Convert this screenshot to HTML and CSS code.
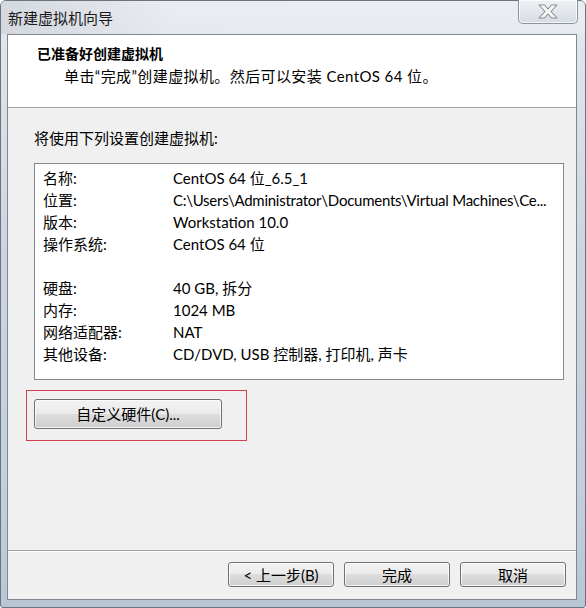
FILE: index.html
```html
<!DOCTYPE html>
<html lang="zh-CN">
<head>
<meta charset="utf-8">
<title>新建虚拟机向导</title>
<link rel="stylesheet" href="styles.css">
</head>
<body>
<div class="window">
  <div class="titlebar">
    <span class="title">新建虚拟机向导</span>
    <button class="close" aria-label="关闭">
      <svg width="24" height="17" viewBox="0 0 24 17">
        <path d="M3 2 H8.5 L12 6 L15.5 2 H21 L15 8.5 L21 15 H15.5 L12 11 L8.5 15 H3 L9 8.5 Z" fill="#f6f6f6" stroke="#8a8e94" stroke-width="1.1" stroke-linejoin="round"/>
      </svg>
    </button>
  </div>
  <div class="client">
    <div class="header">
      <div class="h-title">已准备好创建虚拟机</div>
      <div class="h-sub">单击“完成”创建虚拟机。然后可以安装 CentOS 64 位。</div>
    </div>
    <div class="content">
      <div class="intro">将使用下列设置创建虚拟机:</div>
      <div class="listbox">
        <div class="row"><span class="k">名称:</span><span class="v">CentOS 64 位_6.5_1</span></div>
        <div class="row"><span class="k">位置:</span><span class="v path">C:\Users\Administrator\Documents\Virtual Machines\Ce...</span></div>
        <div class="row"><span class="k">版本:</span><span class="v">Workstation 10.0</span></div>
        <div class="row"><span class="k">操作系统:</span><span class="v">CentOS 64 位</span></div>
        <div class="row"><span class="k"></span><span class="v"></span></div>
        <div class="row"><span class="k">硬盘:</span><span class="v">40 GB, 拆分</span></div>
        <div class="row"><span class="k">内存:</span><span class="v">1024 MB</span></div>
        <div class="row"><span class="k">网络适配器:</span><span class="v">NAT</span></div>
        <div class="row"><span class="k">其他设备:</span><span class="v">CD/DVD, USB 控制器, 打印机, 声卡</span></div>
      </div>
      <div class="highlight">
        <button class="btn btn-custom">自定义硬件(C)...</button>
      </div>
    </div>
    <div class="footer">
      <button class="btn">&lt;&nbsp;上一步(B)</button>
      <button class="btn">完成</button>
      <button class="btn">取消</button>
    </div>
  </div>
</div>
</body>
</html>
```

FILE: styles.css
```css
* { box-sizing: border-box; }
html, body {
  margin: 0;
  padding: 0;
  width: 586px;
  height: 608px;
  overflow: hidden;
  background: #ffffff;
}
body {
  font-family: "Lato", "Noto Sans CJK SC", sans-serif;
  font-size: 15px;
  color: #000;
}
.window {
  width: 586px;
  height: 608px;
  display: flex;
  flex-direction: column;
  border: 1px solid #6b7580;
  border-radius: 6px 6px 3px 3px;
  background: linear-gradient(180deg, #e9edf1 0%, #dfe5ec 8%, #cdd6e0 40%, #c3cfdc 80%, #b9c6d5 100%);
}
.titlebar {
  height: 33px;
  display: flex;
  align-items: flex-start;
  background: linear-gradient(90deg, rgba(200,205,212,0.6) 0%, rgba(235,238,241,0.4) 30%, rgba(240,242,244,0.3) 100%);
}
.title {
  padding: 6px 0 0 7px;
  line-height: 22px;
  font-size: 15px;
  color: #1a1a1a;
}
.close {
  margin: -1px 7px 0 auto;
  width: 60px;
  height: 24px;
  padding: 0;
  border: 1px solid #8d949c;
  border-top: none;
  border-radius: 0 0 5px 5px;
  background: linear-gradient(180deg, #eef1f4 0%, #e3e7ec 50%, #d6dce3 100%);
  box-shadow: inset 0 0 0 1px rgba(255,255,255,0.7);
  display: flex;
  align-items: center;
  justify-content: center;
}
.client {
  flex: 1;
  margin: 0 8px 7px 6px;
  border: 1px solid #7f8791;
  background: #f0f0f0;
  display: flex;
  flex-direction: column;
}
.header {
  height: 73px;
  background: #ffffff;
  border-bottom: 1px solid #a0a0a0;
  padding: 8px 0 0 29px;
}
.h-title {
  font-family: "Noto Sans CJK SC", sans-serif;
  font-weight: bold;
  font-size: 14px;
  line-height: 20px;
}
.h-sub {
  padding-left: 27px;
  margin-top: 2px;
  line-height: 22px;
  font-size: 15px;
  letter-spacing: 0.4px;
}
.content {
  flex: 1;
  padding: 19px 0 0 26px;
}
.intro {
  line-height: 22px;
}
.listbox {
  margin-top: 14px;
  width: 530px;
  height: 217px;
  border: 1px solid #828790;
  background: #ffffff;
  padding: 3px 0 0 8px;
}
.row {
  display: flex;
  height: 22px;
  line-height: 22px;
  white-space: nowrap;
}
.k { width: 130px; flex: none; }
.v { flex: none; }
.path { letter-spacing: -0.25px; }
.highlight {
  margin: 10px 0 0 -8px;
  width: 221px;
  height: 51px;
  border: 1px solid #d2404f;
  padding: 8px 0 0 7px;
}
.btn {
  font-family: inherit;
  font-size: 15px;
  color: #000;
  height: 25px;
  width: 106px;
  padding: 0;
  border: 1px solid #707070;
  border-radius: 3px;
  background: linear-gradient(180deg, #f2f2f2 0%, #ebebeb 49%, #dddddd 50%, #cfcfcf 100%);
  box-shadow: inset 0 0 0 1px rgba(255,255,255,0.75);
  line-height: 22px;
}
.btn-custom {
  width: 188px;
  height: 30px;
}
.footer {
  height: 49px;
  border-top: 1px solid #a0a0a0;
  box-shadow: inset 0 1px 0 #ffffff;
  display: flex;
  justify-content: flex-end;
  gap: 10px;
  padding: 11px 10px 0 0;
}
```
